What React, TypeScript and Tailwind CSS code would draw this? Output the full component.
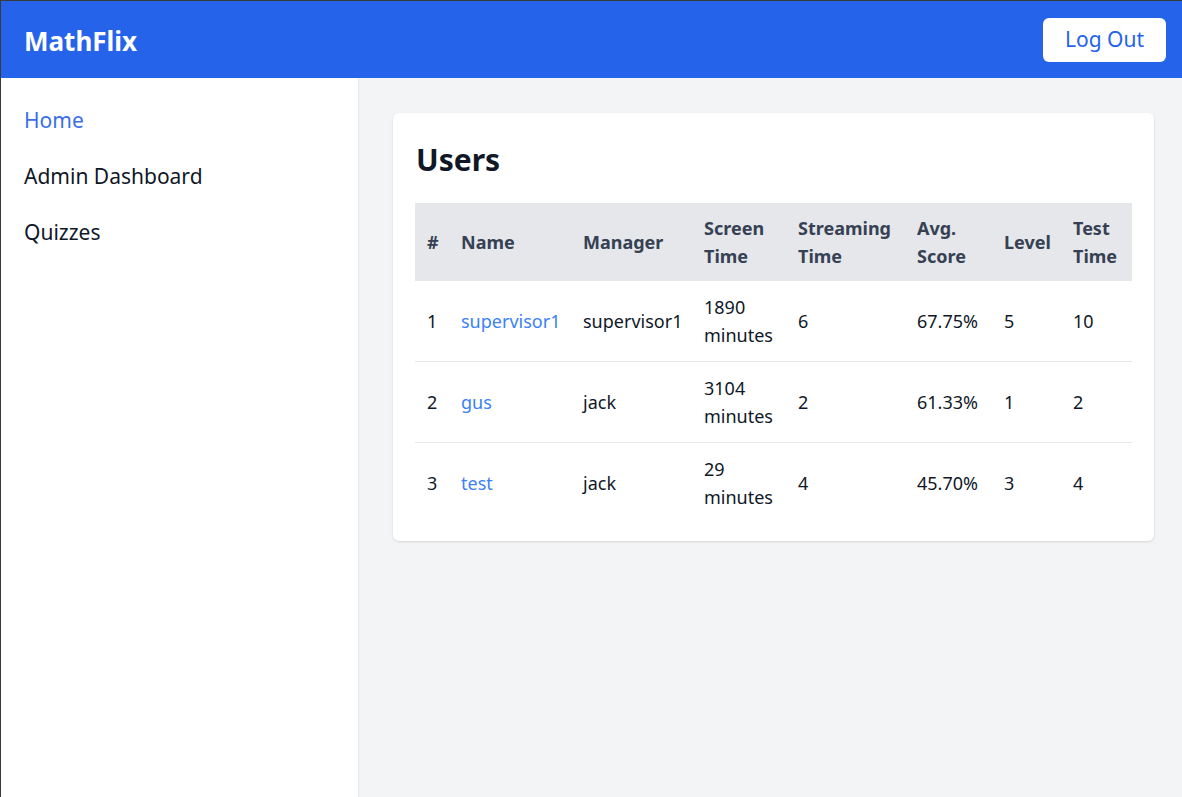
const users = [
  { id: 1, name: 'supervisor1', manager: 'supervisor1', screen: '1890 minutes', streaming: '6', score: '67.75%', level: '5', test: '10' },
  { id: 2, name: 'gus', manager: 'jack', screen: '3104 minutes', streaming: '2', score: '61.33%', level: '1', test: '2' },
  { id: 3, name: 'test', manager: 'jack', screen: '29 minutes', streaming: '4', score: '45.70%', level: '3', test: '4' },
];

export default function App() {
  return (
    <div
      className="h-[797px] flex flex-col border-t border-l border-[#3a3a3a] overflow-hidden"
      style={{ fontFamily: '"Noto Sans", "Open Sans", sans-serif' }}
    >
      <header className="h-[77px] shrink-0 bg-[#2563eb] flex items-center justify-between pl-[23px] pr-4">
        <h1 className="mt-[3px] text-[26px] font-bold text-white">MathFlix</h1>
        <button className="mt-px bg-white text-[#2563eb] text-[21px] h-11 px-[22px] rounded-md">Log Out</button>
      </header>

      <div className="flex flex-1 min-h-0">
        <aside className="w-[358px] shrink-0 bg-white border-r border-gray-200 pt-6 px-[23px]">
          <nav className="flex flex-col gap-5 text-[21px] leading-7">
            <a className="py-1 text-[#3b6fe8]">Home</a>
            <a className="py-1 text-gray-900">Admin Dashboard</a>
            <a className="py-1 text-gray-900">Quizzes</a>
          </nav>
        </aside>

        <main className="flex-1 bg-gray-100 pt-[35px] pl-[34px] pr-[28px]">
          <div className="bg-white rounded-md shadow px-[22px] pt-[22px] pb-[18px]">
            <h2 className="mt-[5px] text-[30px] leading-[40px] font-bold text-gray-900 mb-[23px] pl-px">Users</h2>
            <table className="w-full table-fixed text-left text-lg">
              <thead className="bg-gray-200 text-gray-700">
                <tr>
                  <th className="w-[34px] px-3 py-[11px] font-bold">#</th>
                  <th className="w-[122px] px-3 py-[11px] font-bold">Name</th>
                  <th className="w-[121px] px-3 py-[11px] font-bold">Manager</th>
                  <th className="w-[94px] px-3 py-[11px] font-bold">Screen Time</th>
                  <th className="w-[119px] px-3 py-[11px] font-bold">Streaming Time</th>
                  <th className="w-[87px] px-3 py-[11px] font-bold">Avg. Score</th>
                  <th className="w-[69px] px-3 py-[11px] font-bold">Level</th>
                  <th className="px-3 py-[11px] font-bold">Test Time</th>
                </tr>
              </thead>
              <tbody className="text-gray-900">
                {users.map((u, i) => (
                  <tr key={u.id} className={i < users.length - 1 ? 'border-b border-gray-200' : ''}>
                    <td className="px-3 py-3">{u.id}</td>
                    <td className="px-3 py-3 text-[#3b82f6]">{u.name}</td>
                    <td className="px-3 py-3">{u.manager}</td>
                    <td className="px-3 py-3">{u.screen}</td>
                    <td className="px-3 py-3">{u.streaming}</td>
                    <td className="px-3 py-3">{u.score}</td>
                    <td className="px-3 py-3">{u.level}</td>
                    <td className="px-3 py-3">{u.test}</td>
                  </tr>
                ))}
              </tbody>
            </table>
          </div>
        </main>
      </div>
    </div>
  );
}
